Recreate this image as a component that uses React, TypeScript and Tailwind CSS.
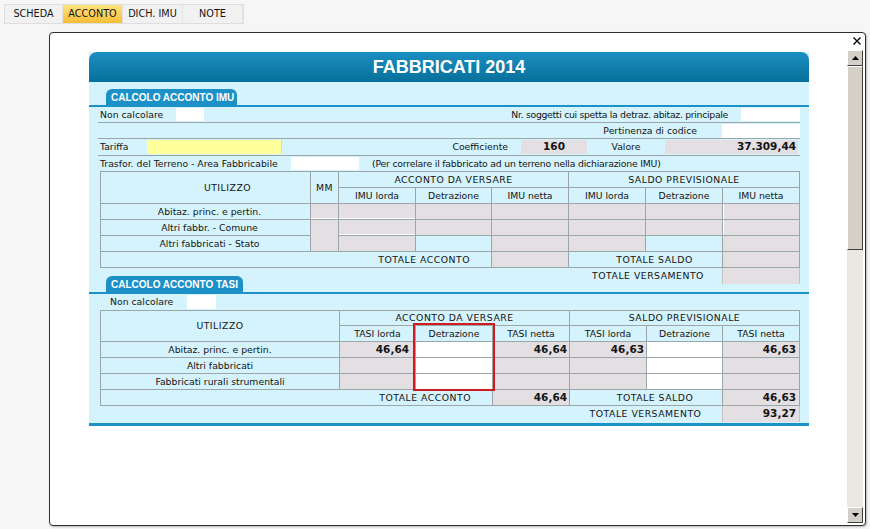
import React from "react";

type P = { className?: string; children?: React.ReactNode };

// grid cell, centred text by default
function C({ className = "", children }: P) {
  return <div className={`flex items-center justify-center overflow-hidden whitespace-nowrap ${className}`}>{children}</div>;
}

function SectionTab({ label, width }: { label: string; width: string }) {
  return (
    <div className={`h-[16px] ${width} rounded-t-[6px] bg-[#1b91c8] text-white font-bold text-[10px] font-['Liberation_Sans',Arial,sans-serif] pl-[5px] flex items-center`}>
      {label}
    </div>
  );
}

function ScrollBtn({ down = false }: { down?: boolean }) {
  return (
    <div className="h-[16px] w-[16px] bg-[#d4d0c8] border border-t-white border-l-white border-r-[#404040] border-b-[#404040] flex items-center justify-center">
      <svg width="7" height="4" viewBox="0 0 7 4">
        {down ? <polygon points="0,0 7,0 3.5,4" fill="#000" /> : <polygon points="0,4 7,4 3.5,0" fill="#000" />}
      </svg>
    </div>
  );
}

const tabs = ["SCHEDA", "ACCONTO", "DICH. IMU", "NOTE"];

export default function App() {
  return (
    <div className="w-[870px] h-[529px] bg-[#f6f6f6] overflow-hidden font-['DejaVu_Sans',sans-serif] text-[9.3px] text-[#141414]">
      {/* top tabs */}
      <div className="flex pt-[4px] pl-[4px]">
        <div className="flex border border-[#dedede] text-[9.7px]">
          {tabs.map((t, i) => (
            <div
              key={t}
              className={`h-[18px] flex items-center justify-center border-r border-[#e4e4e4] ${i === 0 ? "w-[58px]" : "w-[60px]"} ${
                t === "ACCONTO" ? "bg-gradient-to-b from-[#ffe27e] to-[#f6be32]" : "bg-[#f1f1f1]"
              }`}
            >
              {t}
            </div>
          ))}
        </div>
      </div>

      {/* dialog */}
      <div className="relative ml-[49px] mt-[8px] w-[817px] h-[494px] flex bg-white border border-[#2e2e2e] rounded-[4px] shadow-[1px_1px_2px_rgba(0,0,0,0.25)]">
        <svg className="absolute top-[4px] right-[4px]" width="8" height="8" viewBox="0 0 8 8">
          <path d="M0.5 0.5 L7.5 7.5 M7.5 0.5 L0.5 7.5" stroke="#000" strokeWidth="1.4" />
        </svg>

        <div className="flex-1">
          <div className="ml-[39px] mt-[19px] w-[720px] bg-[#d4f3fc]">
            <div className="h-[30px] rounded-t-[8px] bg-gradient-to-b from-[#1b8fc0] to-[#07709c] flex items-center justify-center text-white font-bold text-[18px] font-['Liberation_Sans',Arial,sans-serif]">
              FABBRICATI 2014
            </div>

            {/* IMU */}
            <div className="h-[23px] flex items-end pl-[17px]">
              <SectionTab label="CALCOLO ACCONTO IMU" width="w-[131px]" />
            </div>
            <div className="h-[2px] bg-[#1b91c8]" />

            <div className="mx-[9px]">
              <div className="flex items-center h-[16px] border-b border-[#9ba6a9]">
                <span className="w-[78px] pl-[2px]">Non calcolare</span>
                <div className="w-[28px] h-[13px] bg-white" />
                <span className="flex-1 text-right pr-[13px] tracking-[-0.3px]">Nr. soggetti cui spetta la detraz. abitaz. principale</span>
                <div className="w-[59px] h-[13px] bg-white" />
              </div>
              <div className="flex items-center h-[16px] border-b border-[#9ba6a9]">
                <span className="flex-1 text-right pr-[25px]">Pertinenza di codice</span>
                <div className="w-[78px] h-[14px] bg-white" />
              </div>
              <div className="flex items-center h-[17px] border-b border-[#9ba6a9]">
                <span className="w-[49px] pl-[2px]">Tariffa</span>
                <div className="w-[135px] h-[14px] bg-[#ffff9c] border-r border-[#e8e07a]" />
                <span className="w-[239px] text-right pr-[13px]">Coefficiente</span>
                <div className="w-[66px] h-[14px] bg-[#e3dfe2] flex items-center justify-center font-bold text-[10.5px]">160</div>
                <span className="w-[78px] text-center">Valore</span>
                <div className="w-[133px] h-[14px] bg-[#e3dfe2] flex items-center justify-end pr-[2px] font-bold text-[10.5px]">37.309,44</div>
              </div>
              <div className="flex items-center h-[15px]">
                <span className="w-[193px] pl-[2px]">Trasfor. del Terreno - Area Fabbricabile</span>
                <div className="w-[68px] h-[13px] bg-white" />
                <span className="ml-[13px] tracking-[-0.2px]">(Per correlare il fabbricato ad un terreno nella dichiarazione IMU)</span>
              </div>

              <div className="ml-[2px] w-[700px] grid grid-cols-[209px_27px_76px_75px_76px_76px_76px_76px] grid-rows-[15px_15px_15px_15px_15px_15px] gap-px p-px bg-[#9ba6a9]">
                <C className="row-span-2 bg-[#d4f3fc] pl-[44px] tracking-[0.5px]">UTILIZZO</C>
                <C className="row-span-2 bg-[#d4f3fc] tracking-[0.5px]">MM</C>
                <C className="col-span-3 bg-[#d4f3fc] tracking-[0.5px]">ACCONTO DA VERSARE</C>
                <C className="col-span-3 bg-[#d4f3fc] tracking-[0.5px]">SALDO PREVISIONALE</C>
                <C className="bg-[#d4f3fc]">IMU lorda</C>
                <C className="bg-[#d4f3fc]">Detrazione</C>
                <C className="bg-[#d4f3fc]">IMU netta</C>
                <C className="bg-[#d4f3fc]">IMU lorda</C>
                <C className="bg-[#d4f3fc]">Detrazione</C>
                <C className="bg-[#d4f3fc]">IMU netta</C>

                <C className="bg-[#d4f3fc] pl-[8px]">Abitaz. princ. e pertin.</C>
                <C className="bg-[#e3dfe2] shadow-[inset_0_-1px_0_#fff]" />
                <C className="bg-[#e3dfe2] shadow-[inset_0_-1px_0_#fff]" />
                <C className="bg-[#e3dfe2]" />
                <C className="bg-[#e3dfe2]" />
                <C className="bg-[#e3dfe2]" />
                <C className="bg-[#e3dfe2]" />
                <C className="bg-[#e3dfe2] shadow-[inset_1px_0_0_#fff]" />

                <C className="bg-[#d4f3fc] pl-[8px]">Altri fabbr. - Comune</C>
                <C className="row-span-2 bg-[#e3dfe2]" />
                <C className="bg-[#e3dfe2] shadow-[inset_0_-1px_0_#fff]" />
                <C className="bg-[#e3dfe2]" />
                <C className="bg-[#e3dfe2]" />
                <C className="bg-[#e3dfe2]" />
                <C className="bg-[#e3dfe2]" />
                <C className="bg-[#e3dfe2] shadow-[inset_1px_0_0_#fff]" />

                <C className="bg-[#d4f3fc] pl-[8px]">Altri fabbricati - Stato</C>
                <C className="bg-[#e3dfe2]" />
                <C className="bg-[#d4f3fc]" />
                <C className="bg-[#e3dfe2]" />
                <C className="bg-[#e3dfe2]" />
                <C className="bg-[#d4f3fc]" />
                <C className="bg-[#e3dfe2]" />

                <C className="col-span-4 bg-[#d4f3fc] justify-end pr-[21px] tracking-[0.5px]">TOTALE ACCONTO</C>
                <C className="bg-[#e3dfe2]" />
                <C className="col-span-2 bg-[#d4f3fc] pl-[18px] tracking-[0.5px]">TOTALE SALDO</C>
                <C className="bg-[#e3dfe2]" />
              </div>
            </div>

            {/* versamento IMU + tab TASI */}
            <div className="flex h-[24px]">
              <div className="self-end ml-[17px]">
                <SectionTab label="CALCOLO ACCONTO TASI" width="w-[137px]" />
              </div>
              <div className="ml-auto mr-[9px] flex h-[16px]">
                <C className="w-[154px] pl-[6px] tracking-[0.5px]">TOTALE VERSAMENTO</C>
                <div className="w-[78px] bg-[#e3dfe2] border-x border-[#c4c2c4]" />
              </div>
            </div>
            <div className="h-[2px] bg-[#1b91c8]" />

            {/* TASI */}
            <div className="mx-[9px]">
              <div className="flex items-center h-[16px]">
                <span className="w-[89px] pl-[12px]">Non calcolare</span>
                <div className="w-[29px] h-[14px] bg-white" />
              </div>

              <div className="relative ml-[2px] w-[700px]">
                <div className="grid grid-cols-[238px_75px_76px_76px_76px_75px_76px] grid-rows-[14px_15px_15px_15px_15px_15px] gap-px p-px bg-[#9ba6a9]">
                  <C className="row-span-2 bg-[#d4f3fc] tracking-[0.5px]">UTILIZZO</C>
                  <C className="col-span-3 bg-[#d4f3fc] tracking-[0.5px]">ACCONTO DA VERSARE</C>
                  <C className="col-span-3 bg-[#d4f3fc] tracking-[0.5px]">SALDO PREVISIONALE</C>
                  <C className="bg-[#d4f3fc]">TASI lorda</C>
                  <C className="bg-[#d4f3fc]">Detrazione</C>
                  <C className="bg-[#d4f3fc]">TASI netta</C>
                  <C className="bg-[#d4f3fc]">TASI lorda</C>
                  <C className="bg-[#d4f3fc]">Detrazione</C>
                  <C className="bg-[#d4f3fc]">TASI netta</C>

                  <C className="bg-[#d4f3fc]">Abitaz. princ. e pertin.</C>
                  <C className="bg-[#e3dfe2] justify-end pr-[6px] font-bold text-[10.5px]">46,64</C>
                  <C className="bg-white" />
                  <C className="bg-[#e3dfe2] justify-end pr-[2px] font-bold text-[10.5px]">46,64</C>
                  <C className="bg-[#e3dfe2] justify-end pr-[2px] font-bold text-[10.5px]">46,63</C>
                  <C className="bg-white" />
                  <C className="bg-[#e3dfe2] justify-end pr-[3px] font-bold text-[10.5px]">46,63</C>

                  <C className="bg-[#d4f3fc]">Altri fabbricati</C>
                  <C className="bg-[#e3dfe2]" />
                  <C className="bg-white" />
                  <C className="bg-[#e3dfe2]" />
                  <C className="bg-[#e3dfe2]" />
                  <C className="bg-white" />
                  <C className="bg-[#e3dfe2]" />

                  <C className="bg-[#d4f3fc]">Fabbricati rurali strumentali</C>
                  <C className="bg-[#e3dfe2]" />
                  <C className="bg-white" />
                  <C className="bg-[#e3dfe2]" />
                  <C className="bg-[#e3dfe2]" />
                  <C className="bg-white" />
                  <C className="bg-[#e3dfe2]" />

                  <C className="col-span-3 bg-[#d4f3fc] justify-end pr-[21px] tracking-[0.5px]">TOTALE ACCONTO</C>
                  <C className="bg-[#e3dfe2] justify-end pr-[2px] font-bold text-[10.5px]">46,64</C>
                  <C className="col-span-2 bg-[#d4f3fc] pl-[18px] tracking-[0.5px]">TOTALE SALDO</C>
                  <C className="bg-[#e3dfe2] justify-end pr-[3px] font-bold text-[10.5px]">46,63</C>
                </div>
                {/* highlighted column */}
                <div className="absolute left-[313px] top-[13px] w-[82px] h-[68px] border-2 border-[#d11a1f]" />
              </div>

              <div className="flex justify-end h-[16px]">
                <C className="w-[153px] tracking-[0.5px]">TOTALE VERSAMENTO</C>
                <div className="w-[78px] bg-[#e3dfe2] border-x border-[#c4c2c4] flex items-center justify-end pr-[3px] font-bold text-[10.5px]">93,27</div>
              </div>
            </div>
            <div className="h-[1px]" />
            <div className="h-[3px] bg-[#1b91c8]" />
          </div>
        </div>

        {/* scrollbar */}
        <div className="w-[16px] mt-[17px] mb-[2px] mr-[2px] flex flex-col bg-[#ebe8e3]">
          <ScrollBtn />
          <div className="h-[184px] bg-[#d4d0c8] border border-t-white border-l-white border-r-[#404040] border-b-[#404040]" />
          <div className="flex-1" />
          <ScrollBtn down />
        </div>
      </div>
    </div>
  );
}
